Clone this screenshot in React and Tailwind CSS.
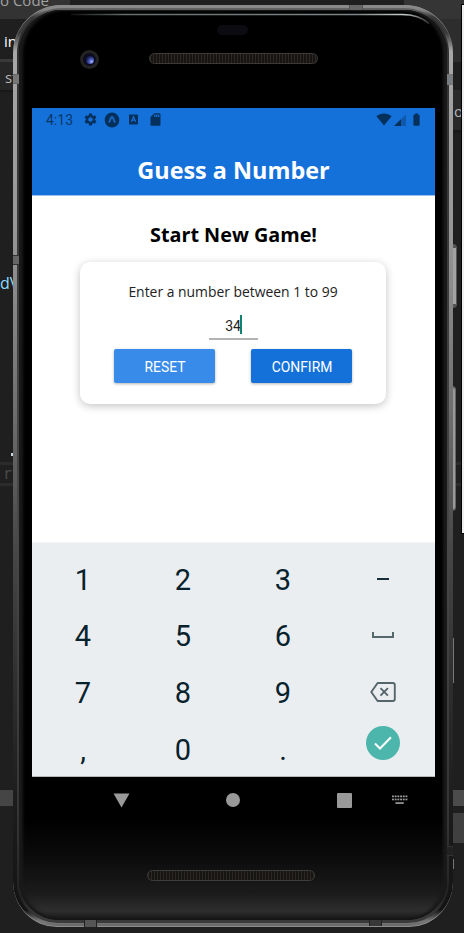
import { MdSettings, MdSdCard, MdBatteryFull } from "react-icons/md";

const speakerMesh =
  "bg-[repeating-linear-gradient(90deg,#2b2825_0px,#2b2825_1px,#171512_1px,#171512_3px)]";

function EditorBackdrop() {
  return (
    <div className="absolute inset-0 flex justify-between overflow-hidden bg-[#1f1f1f] font-['Open_Sans','Noto_Sans',sans-serif]">
      <div className="flex w-[70px] flex-col whitespace-nowrap">
        <div className="h-[19px] bg-[#333333] text-[15px] leading-[0px] text-[#a0a0a0]">o Code</div>
        <div className="h-10 bg-[#1f1f1f] pl-1 text-[15px] leading-[44px] text-white">in</div>
        <div className="h-[3px] bg-[#3a3a3a]" />
        <div className="h-7 bg-[#262626] pl-[5px] text-[15px] leading-[30px] text-[#b5b5b5]">st</div>
        <div className="h-[3px] bg-gradient-to-b from-[#151515] to-[#1f1f1f]" />
        <div className="h-[369px] pt-[179px] text-[16px] leading-[22px] text-[#8fdcfe]">
          dV
          <div className="ml-[11px] mt-[159px] size-[3px] bg-[#c5d8e8]" />
        </div>
        <div className="h-[3px] bg-[#2b2b2b]" />
        <div className="h-[18px] pl-[3px] font-['DejaVu_Sans_Mono',monospace] text-[15px] leading-[18px] text-[#4b4b4b]">r</div>
        <div className="h-[3px] bg-[#2b2b2b]" />
        <div className="h-[304px]" />
        <div className="h-4 bg-[#454545]" />
      </div>
      <div className="flex w-[60px]">
        <div className="flex flex-1 flex-col">
          <div className="h-[19px] bg-[#353535]" />
          <div className="h-[43px] bg-[#2d2d2d]" />
          <div className="h-7 bg-[#1f1f1f]" />
          <div className="h-10 bg-[#292929] pl-[50px] text-[15px] leading-[43px] text-[#b5b5b5]">o</div>
          <div className="h-[4px] bg-gradient-to-b from-[#151515] to-[#1f1f1f]" />
          <div className="h-[328px]" />
          <div className="h-[3px] bg-[#2b2b2b]" />
          <div className="h-[18px]" />
          <div className="h-[3px] bg-[#2b2b2b]" />
          <div className="h-[304px]" />
          <div className="h-4 bg-[#4b4b4b]" />
          <div className="h-[7px]" />
          <div className="h-[30px] bg-[#404040]" />
        </div>
        <div className="absolute right-0 top-1 h-[530px] w-[3px] border-y border-l border-black bg-[#efefef]" />
      </div>
    </div>
  );
}

function SideButtons() {
  return (
    <>
      <div className="absolute left-[452px] top-[244px] h-[64px] w-[5px] rounded-r-sm border-y-4 border-r border-[#555] bg-[#a3a3a3]" />
      <div className="absolute left-[452px] top-[386px] h-[125px] w-[4px] rounded-r-sm border-y-2 border-r border-[#666] bg-[#999]" />
      <div className="absolute left-[453px] top-[638px] h-[45px] w-px bg-[#777]" />
      <div className="absolute left-[453px] top-[859px] h-[10px] w-px bg-[#777]" />
    </>
  );
}

function StatusBar() {
  return (
    <div className="flex h-[23px] items-center pl-[14px] pr-[11px] text-[#06305c]">
      <span className="w-[37px] pt-[1px] font-['Roboto',sans-serif] text-[14px] leading-[20px] text-[#0b3768]">4:13</span>
      <MdSettings size={15} />
      <svg className="ml-[6px]" width="16" height="16" viewBox="0 0 16 16">
        <circle cx="8" cy="8" r="7.4" fill="currentColor" />
        <path d="M4.9 10.6 7.4 5.2h1.2L11.1 10.6" fill="none" stroke="#1a6ac2" strokeWidth="1.7" />
      </svg>
      <svg className="ml-[8px]" width="11" height="11" viewBox="0 0 11 11">
        <rect x="1" y="0.5" width="9" height="10" rx="0.8" fill="currentColor" />
        <path d="M3.3 7.8 5.5 2.7 7.7 7.8M4.2 6.2h2.6" fill="none" stroke="#1571da" strokeWidth="1.1" />
      </svg>
      <MdSdCard size={15} className="ml-[9px]" />
      <svg className="ml-auto" width="16" height="13" viewBox="0 0 16 13">
        <path d="M.4 3.2C4.6-.3 11.4-.3 15.6 3.2L8 12.5z" fill="currentColor" />
      </svg>
      <svg className="ml-[2px]" width="12" height="12" viewBox="0 0 12 12">
        <path d="M0 12 12 .5V12z" fill="currentColor" opacity=".38" />
        <path d="M0 12 7 5.3V12z" fill="currentColor" />
      </svg>
      <MdBatteryFull size={15} className="ml-[3px]" />
    </div>
  );
}

function GameButton({ label, color }) {
  return (
    <button
      className={`h-[34px] w-[101px] rounded-[2px] pl-px pt-[3px] font-['Roboto',sans-serif] text-[13.9px] leading-none text-white shadow-[0_1px_3px_rgba(0,0,0,0.3)] ${color}`}
    >
      {label}
    </button>
  );
}

function StartGame() {
  return (
    <main className="flex h-[346px] flex-col items-center bg-white font-['Open_Sans','Noto_Sans',sans-serif]">
      <h2 className="mt-[25px] text-[19.8px] font-bold leading-[28px] text-black">Start New Game!</h2>
      <section className="mr-[1px] mt-[13px] flex h-[142px] w-[306px] flex-col items-center rounded-[10px] bg-white shadow-[0_2px_8px_rgba(0,0,0,0.24)]">
        <p className="mt-[20px] text-[13.9px] leading-5 text-[#222]">Enter a number between 1 to 99</p>
        <div className="mt-[12px] flex h-[26px] w-[49px] items-start justify-center border-b-2 border-[#b3b3b3] pl-px pt-px font-['Roboto',sans-serif] text-[14px] leading-[22px] text-[#222]">
          34
          <span className="-ml-px h-[19px] w-[2px] bg-[#118271]" />
        </div>
        <div className="mt-[9px] flex w-[238px] justify-between">
          <GameButton label="RESET" color="bg-[#398bea]" />
          <GameButton label="CONFIRM" color="bg-[#1571da]" />
        </div>
      </section>
    </main>
  );
}

function SpaceIcon() {
  return (
    <svg width="22" height="8" viewBox="0 0 22 8" fill="none" stroke="#55686e" strokeWidth="2">
      <path d="M1 1v5h20V1" />
    </svg>
  );
}

function BackspaceIcon() {
  return (
    <svg width="26" height="20" viewBox="0 0 26 20" fill="none" stroke="#55656c" strokeWidth="1.9">
      <path d="M7.6 1h15.2a2 2 0 0 1 2 2v14a2 2 0 0 1-2 2H7.6L1.3 10z" strokeLinejoin="round" />
      <path d="m10.5 6.2 7.4 7.4M17.9 6.2l-7.4 7.4" />
    </svg>
  );
}

function DoneKey() {
  return (
    <span className="mb-[11px] flex size-[34px] items-center justify-center rounded-full bg-[#4db6ac]">
      <svg width="18" height="14" viewBox="0 0 18 14" fill="none" stroke="white" strokeWidth="2">
        <path d="m1 7.5 5 5L17 1.3" />
      </svg>
    </span>
  );
}

const keys = [
  "1", "2", "3", <span className="h-[2px] w-[12px] bg-[#16303b]" />,
  "4", "5", "6", <SpaceIcon />,
  "7", "8", "9", <BackspaceIcon />,
  ",", "0", ".", <DoneKey />,
];

function Keypad() {
  return (
    <div className="grid h-[235px] grid-cols-[100px_100px_100px_100px] grid-rows-[56.6px_56.6px_56.6px_56.6px] border-b border-t border-b-[#b5b9bb] border-t-[#f4f6f7] bg-[#ebeef1] pt-[7px] font-['Roboto',sans-serif] text-[29px] leading-none text-[#07222c]">
      {keys.map((key, i) => (
        <div
          key={i}
          className={`flex items-center justify-center ${typeof key === "string" ? "pl-[2px] pt-[4px]" : "pl-[1px] pt-[1px]"}`}
        >
          {key}
        </div>
      ))}
    </div>
  );
}

function NavBar() {
  return (
    <div className="flex h-[46px] items-center pl-[81px] text-[#999]">
      <svg width="17" height="15" viewBox="0 0 17 15"><path d="M.5.5h16L8.5 14.5z" fill="currentColor" /></svg>
      <span className="ml-[96px] size-[14px] rounded-full bg-[#999]" />
      <span className="ml-[97px] size-[15px] rounded-[1px] bg-[#999]" />
      <svg className="ml-[40px]" width="16" height="10" viewBox="0 0 16 10" fill="currentColor">
        {[0, 1, 2, 3, 4, 5].map((c) => (
          <g key={c}>
            <rect x={c * 2.7} y="0.5" width="1.9" height="1.7" />
            <rect x={c * 2.7} y="3.6" width="1.9" height="1.7" />
          </g>
        ))}
        <rect x="3.4" y="7.2" width="8.4" height="1.7" />
      </svg>
    </div>
  );
}

function TopBezel() {
  return (
    <div className="relative h-[103px]">
      <svg className="absolute inset-0" width="440" height="103" viewBox="0 0 440 103" fill="none">
        <defs>
          <linearGradient id="shine" x1="58" x2="416" y1="0" y2="0" gradientUnits="userSpaceOnUse">
            <stop stopColor="#111" />
            <stop offset=".15" stopColor="#65706f" />
            <stop offset=".8" stopColor="#7d8787" />
            <stop offset=".93" stopColor="#c7d0d0" />
            <stop offset="1" stopColor="#333" />
          </linearGradient>
        </defs>
        <path d="M58 9.5h331q17 0 27 9" stroke="url(#shine)" strokeWidth="1.6" />
      </svg>
      <div className="flex h-[30px] items-end justify-center pr-px">
        <span className="h-[10px] w-[31px] rounded-full bg-[#0b0b11]" />
      </div>
      <div className="flex items-center pl-[67px] pt-[15px]">
        <span className="flex size-[19px] items-center justify-center rounded-full bg-[#252322]">
          <span className="flex size-[13px] items-center justify-center rounded-full bg-[#0b0c20]">
            <span className="size-[8px] rounded-full bg-[radial-gradient(circle_at_70%_70%,#a9bbff_0%,#4a59b8_30%,#161b48_70%)]" />
          </span>
        </span>
        <span className={`-mt-[3px] ml-[50px] h-[11px] w-[169px] rounded-full border border-[#3d3a37] ${speakerMesh}`} />
      </div>
    </div>
  );
}

function Phone() {
  return (
    <div className="relative ml-[13px] h-[922px] w-[440px] overflow-hidden rounded-b-[44px] rounded-t-[48px] bg-[linear-gradient(180deg,#8c8c8c_0px,#858585_5px,#3a3a3a_12px,#3a3a3a_28px,#a8a8a8_46px,#a2a2a2_90px,#969696_230px,#707070_400px,#484848_540px,#2e2e2e_680px,#1c1c1c_800px,#141414_905px,#777_916px,#666_922px)]">
      <div className="absolute inset-x-[4px] bottom-[4px] top-[3px] rounded-b-[41px] rounded-t-[45px] bg-[linear-gradient(180deg,#666_0px,#2c2c2c_12px,#333_60px,#484848_540px,#333_820px,#222_890px,#3a3a3a_910px)]" />
      <div className="absolute inset-x-[6px] bottom-[7px] top-[5px] rounded-b-[40px] rounded-t-[43px] bg-[linear-gradient(180deg,#000_0%,#000_89%,#0b0b0b_93%,#1b1b1b_97%,#2e2e2e_99%,#151515_100%)] shadow-[inset_4px_0_3px_#1a1a1a,inset_-4px_0_3px_#1a1a1a,inset_0_0_0_1px_#101010]" />
      <div className="absolute inset-0 rounded-b-[44px] rounded-t-[48px] shadow-[inset_0_1px_0_#8a8a8a,inset_0_-1px_0_#8d8d8d]" />
      <div className="absolute left-0 top-[69px] h-[10px] w-[6px] border-y border-[#666] bg-[#777]" />
      <div className="absolute right-0 top-[69px] h-[11px] w-[6px] border-y border-[#777] bg-[#777d80]" />
      <div className="absolute left-0 top-[250px] h-[10px] w-[6px] border-y border-[#333] bg-[#666]" />
      <div className="absolute right-0 top-[841px] h-[10px] w-[6px] border-y border-[#333] bg-[#222]" />
      <div className="absolute left-[336px] top-0 h-[5px] w-[14px] border-x border-[#555] bg-[#666]" />
      <div className="absolute bottom-0 left-[71px] h-[7px] w-[13px] border-x border-[#222] bg-[#555]" />
      <div className="absolute bottom-[1px] left-[356px] h-[6px] w-[13px] border-x border-[#222] bg-[#383838]" />
      <div className="relative flex flex-col">
        <TopBezel />
        <div className="ml-[19px] w-[403px]">
          <header className="h-[88px] border-b border-[#9bc3f1] bg-[#1571da]">
            <StatusBar />
            <h1 className="mt-[23px] text-center font-['Open_Sans','Noto_Sans',sans-serif] text-[23.4px] font-bold leading-[32px] text-white">
              Guess a Number
            </h1>
          </header>
          <StartGame />
          <Keypad />
          <NavBar />
        </div>
        <span className={`ml-[134px] mt-[47px] h-[11px] w-[168px] rounded-full border border-[#3f3d3b] ${speakerMesh}`} />
      </div>
    </div>
  );
}

export default function App() {
  return (
    <div className="relative h-[933px] w-[464px] overflow-hidden pt-[5px]">
      <EditorBackdrop />
      <SideButtons />
      <Phone />
    </div>
  );
}
